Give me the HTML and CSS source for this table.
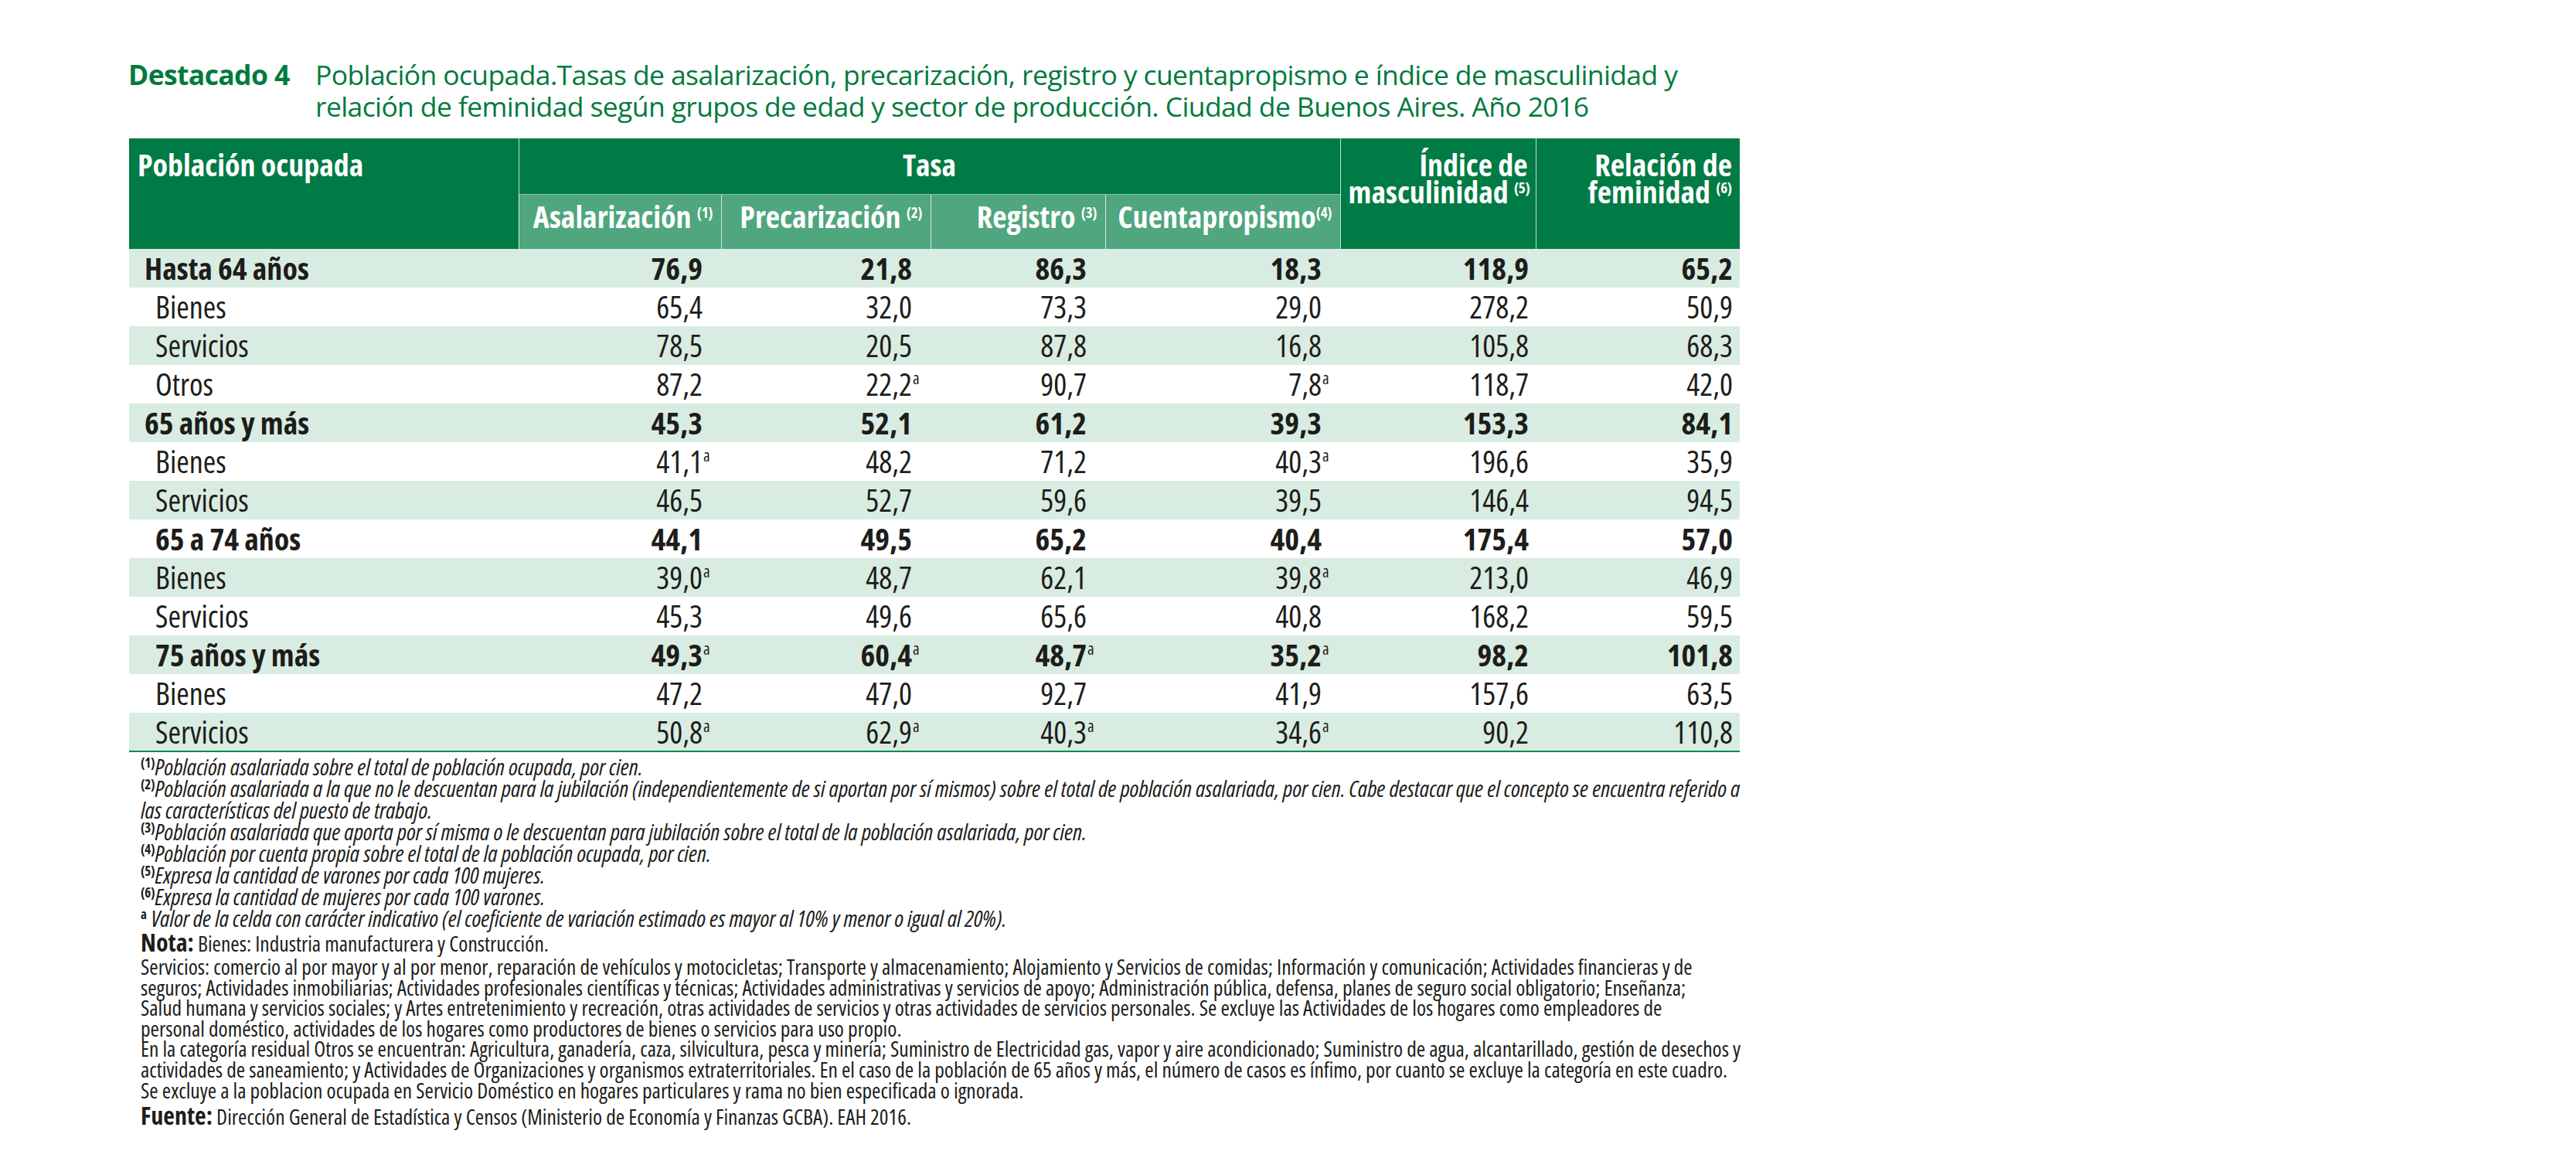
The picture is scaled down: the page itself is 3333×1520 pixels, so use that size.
FILE: index.html
```html
<!DOCTYPE html>
<html lang="es">
<head>
<meta charset="utf-8">
<title>Destacado 4</title>
<link rel="stylesheet" href="styles.css">
</head>
<body>
<div class="page">
  <div class="title">
    <div class="title-label">Destacado 4</div>
    <div class="title-text">
      <div>Población ocupada.Tasas de asalarización, precarización, registro y cuentapropismo e índice de masculinidad y</div>
      <div>relación de feminidad según grupos de edad y sector de producción. Ciudad de Buenos Aires. Año 2016</div>
    </div>
  </div>

  <table class="data">
    <colgroup>
      <col class="c0"><col class="c1"><col class="c2"><col class="c3"><col class="c4"><col class="c5"><col class="c6">
    </colgroup>
    <thead>
      <tr class="hr1">
        <th rowspan="2" class="h-left">Población ocupada</th>
        <th colspan="4" class="h-center">Tasa</th>
        <th rowspan="2">Índice de<br>masculinidad <sup>(5)</sup></th>
        <th rowspan="2">Relación de<br>feminidad <sup>(6)</sup></th>
      </tr>
      <tr class="hr2">
        <th class="sub">Asalarización <sup>(1)</sup></th>
        <th class="sub">Precarización <sup>(2)</sup></th>
        <th class="sub">Registro <sup>(3)</sup></th>
        <th class="sub">Cuentapropismo<sup>(4)</sup></th>
      </tr>
    </thead>
    <tbody>
      <tr class="band bold">
        <td class="lab">Hasta 64 años</td>
        <td class="n">76,9<span class="slot"></span></td><td class="n">21,8<span class="slot"></span></td><td class="n">86,3<span class="slot"></span></td><td class="n">18,3<span class="slot"></span></td><td class="m">118,9</td><td class="m">65,2</td>
      </tr>
      <tr>
        <td class="lab ind">Bienes</td>
        <td class="n">65,4<span class="slot"></span></td><td class="n">32,0<span class="slot"></span></td><td class="n">73,3<span class="slot"></span></td><td class="n">29,0<span class="slot"></span></td><td class="m">278,2</td><td class="m">50,9</td>
      </tr>
      <tr class="band">
        <td class="lab ind">Servicios</td>
        <td class="n">78,5<span class="slot"></span></td><td class="n">20,5<span class="slot"></span></td><td class="n">87,8<span class="slot"></span></td><td class="n">16,8<span class="slot"></span></td><td class="m">105,8</td><td class="m">68,3</td>
      </tr>
      <tr>
        <td class="lab ind">Otros</td>
        <td class="n">87,2<span class="slot"></span></td><td class="n">22,2<span class="slot">a</span></td><td class="n">90,7<span class="slot"></span></td><td class="n">7,8<span class="slot">a</span></td><td class="m">118,7</td><td class="m">42,0</td>
      </tr>
      <tr class="band bold">
        <td class="lab">65 años y más</td>
        <td class="n">45,3<span class="slot"></span></td><td class="n">52,1<span class="slot"></span></td><td class="n">61,2<span class="slot"></span></td><td class="n">39,3<span class="slot"></span></td><td class="m">153,3</td><td class="m">84,1</td>
      </tr>
      <tr>
        <td class="lab ind">Bienes</td>
        <td class="n">41,1<span class="slot">a</span></td><td class="n">48,2<span class="slot"></span></td><td class="n">71,2<span class="slot"></span></td><td class="n">40,3<span class="slot">a</span></td><td class="m">196,6</td><td class="m">35,9</td>
      </tr>
      <tr class="band">
        <td class="lab ind">Servicios</td>
        <td class="n">46,5<span class="slot"></span></td><td class="n">52,7<span class="slot"></span></td><td class="n">59,6<span class="slot"></span></td><td class="n">39,5<span class="slot"></span></td><td class="m">146,4</td><td class="m">94,5</td>
      </tr>
      <tr class="bold">
        <td class="lab ind">65 a 74 años</td>
        <td class="n">44,1<span class="slot"></span></td><td class="n">49,5<span class="slot"></span></td><td class="n">65,2<span class="slot"></span></td><td class="n">40,4<span class="slot"></span></td><td class="m">175,4</td><td class="m">57,0</td>
      </tr>
      <tr class="band">
        <td class="lab ind">Bienes</td>
        <td class="n">39,0<span class="slot">a</span></td><td class="n">48,7<span class="slot"></span></td><td class="n">62,1<span class="slot"></span></td><td class="n">39,8<span class="slot">a</span></td><td class="m">213,0</td><td class="m">46,9</td>
      </tr>
      <tr>
        <td class="lab ind">Servicios</td>
        <td class="n">45,3<span class="slot"></span></td><td class="n">49,6<span class="slot"></span></td><td class="n">65,6<span class="slot"></span></td><td class="n">40,8<span class="slot"></span></td><td class="m">168,2</td><td class="m">59,5</td>
      </tr>
      <tr class="band bold">
        <td class="lab ind">75 años y más</td>
        <td class="n">49,3<span class="slot">a</span></td><td class="n">60,4<span class="slot">a</span></td><td class="n">48,7<span class="slot">a</span></td><td class="n">35,2<span class="slot">a</span></td><td class="m">98,2</td><td class="m">101,8</td>
      </tr>
      <tr>
        <td class="lab ind">Bienes</td>
        <td class="n">47,2<span class="slot"></span></td><td class="n">47,0<span class="slot"></span></td><td class="n">92,7<span class="slot"></span></td><td class="n">41,9<span class="slot"></span></td><td class="m">157,6</td><td class="m">63,5</td>
      </tr>
      <tr class="band last">
        <td class="lab ind">Servicios</td>
        <td class="n">50,8<span class="slot">a</span></td><td class="n">62,9<span class="slot">a</span></td><td class="n">40,3<span class="slot">a</span></td><td class="n">34,6<span class="slot">a</span></td><td class="m">90,2</td><td class="m">110,8</td>
      </tr>
    </tbody>
  </table>

  <div class="notes">
    <div class="fn"><sup>(1)</sup><em>Población asalariada sobre el total de población ocupada, por cien.</em></div>
    <div class="fn"><sup>(2)</sup><em>Población asalariada a la que no le descuentan para la jubilación (independientemente de si aportan por sí mismos) sobre el total de población asalariada, por cien. Cabe destacar que el concepto se encuentra referido a</em></div>
    <div class="fn"><em>las características del puesto de trabajo.</em></div>
    <div class="fn"><sup>(3)</sup><em>Población asalariada que aporta por sí misma o le descuentan para jubilación sobre el total de la población asalariada, por cien.</em></div>
    <div class="fn"><sup>(4)</sup><em>Población por cuenta propia sobre el total de la población ocupada, por cien.</em></div>
    <div class="fn"><sup>(5)</sup><em>Expresa la cantidad de varones por cada 100 mujeres.</em></div>
    <div class="fn"><sup>(6)</sup><em>Expresa la cantidad de mujeres por cada 100 varones.</em></div>
    <div class="fn"><sup>a</sup> <em>Valor de la celda con carácter indicativo (el coeficiente de variación estimado es mayor al 10% y menor o igual al 20%).</em></div>
    <div class="nota-head"><strong>Nota:</strong> Bienes: Industria manufacturera y Construcción.</div>
    <div class="nl">Servicios: comercio al por mayor y al por menor, reparación de vehículos y motocicletas; Transporte y almacenamiento; Alojamiento y Servicios de comidas; Información y comunicación; Actividades financieras y de</div>
    <div class="nl">seguros; Actividades inmobiliarias; Actividades profesionales científicas y técnicas; Actividades administrativas y servicios de apoyo; Administración pública, defensa, planes de seguro social obligatorio; Enseñanza;</div>
    <div class="nl">Salud humana y servicios sociales; y Artes entretenimiento y recreación, otras actividades de servicios y otras actividades de servicios personales. Se excluye las Actividades de los hogares como empleadores de</div>
    <div class="nl">personal doméstico, actividades de los hogares como productores de bienes o servicios para uso propio.</div>
    <div class="nl">En la categoría residual Otros se encuentran: Agricultura, ganadería, caza, silvicultura, pesca y minería; Suministro de Electricidad gas, vapor y aire acondicionado; Suministro de agua, alcantarillado, gestión de desechos y</div>
    <div class="nl">actividades de saneamiento; y Actividades de Organizaciones y organismos extraterritoriales. En el caso de la población de 65 años y más, el número de casos es ínfimo, por cuanto se excluye la categoría en este cuadro.</div>
    <div class="nl">Se excluye a la poblacion ocupada en Servicio Doméstico en hogares particulares y rama no bien especificada o ignorada.</div>
    <div class="fuente"><strong>Fuente:</strong> Dirección General de Estadística y Censos (Ministerio de Economía y Finanzas GCBA). EAH 2016.</div>
  </div>
</div>
</body>
</html>
```

FILE: styles.css
```css
* { box-sizing: border-box; }
html, body { margin: 0; padding: 0; background: #fff; }
body {
  font-family: "Open Sans", "Noto Sans", sans-serif;
  font-stretch: 75%;
  color: #1d1d1b;
}
.page { padding: 76px 0 40px 166px; width: 2300px; }

.title {
  display: flex;
  color: #007a3d;
  font-size: 35.5px;
  line-height: 41px;
  font-stretch: 100%;
  letter-spacing: -0.62px;
}
.title-label { font-weight: 700; width: 242px; flex: none; }
.title-text { white-space: nowrap; }

.data {
  border-collapse: collapse;
  table-layout: fixed;
  width: 2084px;
  margin: 21px 0 0 1px;
}
.c0 { width: 504px; } .c1 { width: 262px; } .c2 { width: 271px; } .c3 { width: 226px; }
.c4 { width: 304px; } .c5 { width: 253px; } .c6 { width: 264px; }

th {
  background: #007b45;
  color: #fff;
  font-weight: 700;
  font-size: 40px;
  line-height: 35px;
  text-align: right;
  vertical-align: top;
  padding: 16px 10px 0;
  border-left: 1px solid rgba(255,255,255,0.75);
  white-space: nowrap;
}
th.h-left { text-align: left; padding-left: 11px; border-left: none; }
th.h-center { text-align: center; }
.hr1 { height: 72px; }
.hr2 { height: 71px; }
th.sub { background: #4fa67f; border-top: 1px solid rgba(255,255,255,0.35); padding-top: 10px; }
th sup { font-size: 19px; line-height: 0; vertical-align: 13px; }

td {
  height: 50px;
  padding: 0;
  font-size: 40px;
  line-height: 40px;
  vertical-align: middle;
  white-space: nowrap;
}
tr.band td { background: #d9ece2; }
tr.bold td { font-weight: 700; }
tr.last td { border-bottom: 2px solid #0a8a4d; }
td.lab { padding-left: 20px; }
td.lab.ind { padding-left: 34px; }
td.n { text-align: right; padding-right: 8px; }
td.m { text-align: right; padding-right: 9px; }
.slot {
  display: inline-block;
  width: 16px;
  text-align: left;
  font-size: 21px;
  font-weight: 400;
  line-height: 20px;
  vertical-align: 15px;
  padding-left: 1px;
}

.notes { padding: 5px 0 0 16px; }
.fn { font-size: 29.5px; line-height: 28px; white-space: nowrap; }
.fn em { font-style: italic; }
.fn sup { font-size: 17px; font-weight: 700; line-height: 0; vertical-align: 10px; font-style: normal; }
.nota-head { font-size: 27.5px; line-height: 34px; white-space: nowrap; }
.nota-head strong, .fuente strong { font-size: 32px; }
.nl { font-size: 27.5px; line-height: 26.6px; white-space: nowrap; }
.fuente { font-size: 27.5px; line-height: 37px; white-space: nowrap; }
```
